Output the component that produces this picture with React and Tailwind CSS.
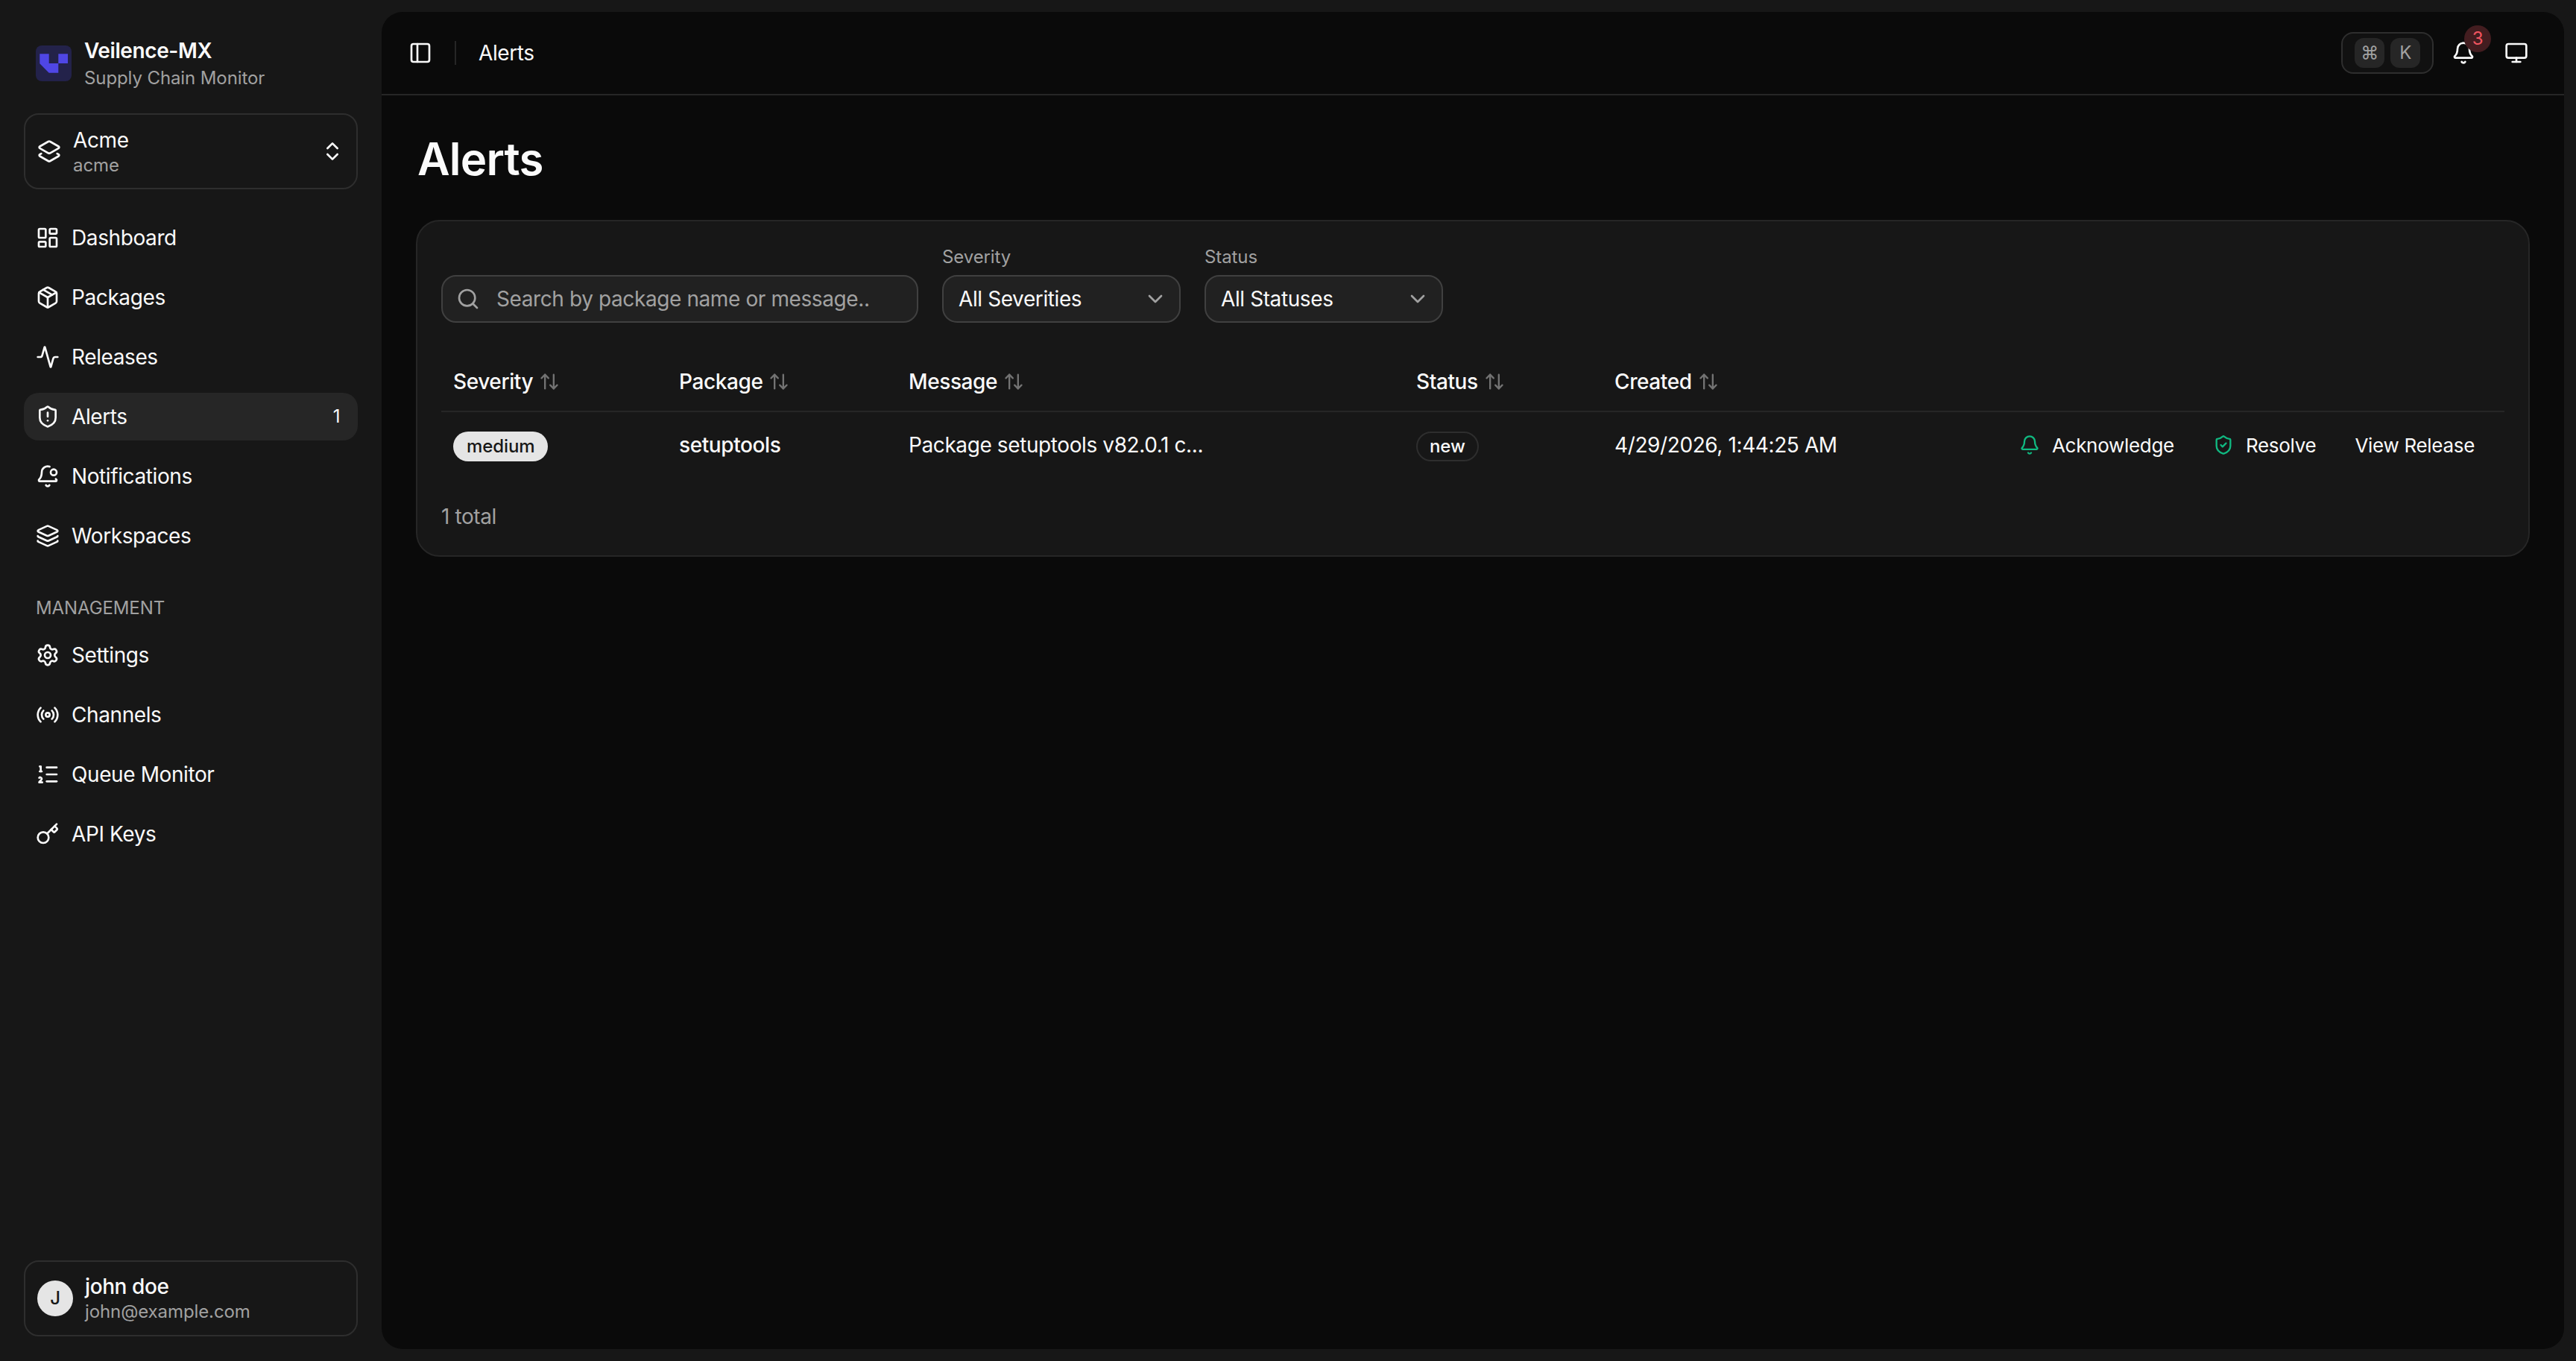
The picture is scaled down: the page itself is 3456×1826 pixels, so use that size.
import {
  Activity, ArrowUpDown, Bell, BellDot, ChevronDown, ChevronsUpDown, Key, Layers, Layers2,
  LayoutDashboard, ListOrdered, Monitor, Package, PanelLeft, Radio, Search, Settings,
  ShieldAlert, ShieldCheck,
} from 'lucide-react'

const MAIN_NAV = [
  { label: 'Dashboard', icon: LayoutDashboard },
  { label: 'Packages', icon: Package },
  { label: 'Releases', icon: Activity },
  { label: 'Alerts', icon: ShieldAlert, active: true, count: 1 },
  { label: 'Notifications', icon: BellDot },
  { label: 'Workspaces', icon: Layers },
]

const MANAGEMENT_NAV = [
  { label: 'Settings', icon: Settings },
  { label: 'Channels', icon: Radio },
  { label: 'Queue Monitor', icon: ListOrdered },
  { label: 'API Keys', icon: Key },
]

const COLUMNS = ['Severity', 'Package', 'Message', 'Status', 'Created']

const ROW_GRID = 'grid grid-cols-[303px_308px_681px_266px_420px_1fr] items-center'

function Logo() {
  return (
    <svg viewBox="0 0 48 48" className="w-12 h-12 shrink-0">
      <rect width="48" height="48" rx="8" fill="#23224a" />
      <path d="M5.3 11.3H17.7V24H30.3V36.7H17.7L5.3 24.3Z M30.3 11.3H43V24H30.3Z" fill="#4f46e5" />
    </svg>
  )
}

function NavItem({ item }) {
  const Icon = item.icon
  return (
    <a className={`flex items-center h-16 px-4 gap-4 rounded-[20px] text-[28px] text-[#fafafa] ${item.active ? 'bg-[#262626]' : ''}`}>
      <Icon size={32} className="shrink-0" />
      <span className="flex-1">{item.label}</span>
      {item.count && <span className="text-[24px] pr-2">{item.count}</span>}
    </a>
  )
}

function Sidebar() {
  return (
    <aside className="w-[512px] shrink-0 flex flex-col px-8 pt-[48px] pb-[33px]">
      <div className="flex items-center gap-[17px] px-4">
        <Logo />
        <div className="flex flex-col">
          <span className="text-[28px] leading-[40px] font-semibold text-[#fafafa]">Veilence-MX</span>
          <span className="text-[24px] leading-[33px] tracking-[-0.1px] text-[#a1a1a1]">Supply Chain Monitor</span>
        </div>
      </div>

      <button className="mt-[31px] h-[102px] flex items-center gap-4 pl-4 pr-4 border-2 border-[#2e2e2e] rounded-[20px] text-left">
        <Layers2 size={32} className="text-[#fafafa] shrink-0" />
        <div className="flex-1 flex flex-col pt-0.5">
          <span className="text-[28px] leading-[36px] text-[#fafafa]">Acme</span>
          <span className="text-[24px] leading-[32px] tracking-[-0.1px] text-[#a1a1a1]">acme</span>
        </div>
        <ChevronsUpDown size={32} className="text-[#fafafa] shrink-0" />
      </button>

      <nav className="mt-[33px] flex flex-col gap-4">
        {MAIN_NAV.map((item) => <NavItem key={item.label} item={item} />)}
      </nav>

      <p className="mt-[49px] px-4 text-[24px] leading-[32px] tracking-[-0.1px] text-[#a1a1a1]">MANAGEMENT</p>
      <nav className="mt-[15px] flex flex-col gap-4">
        {MANAGEMENT_NAV.map((item) => <NavItem key={item.label} item={item} />)}
      </nav>

      <button className="mt-auto h-[102px] flex items-center gap-4 px-4 border-2 border-[#2e2e2e] rounded-[20px] text-left">
        <span className="w-12 h-12 rounded-full bg-[#e5e5e5] text-[#171717] flex items-center justify-center text-[24px] font-medium shrink-0">J</span>
        <div className="flex flex-col">
          <span className="text-[28px] leading-[36px] font-medium text-[#fafafa]">john doe</span>
          <span className="text-[24px] leading-[32px] tracking-[-0.1px] text-[#a1a1a1]">john@example.com</span>
        </div>
      </button>
    </aside>
  )
}

function Header() {
  return (
    <header className="h-[112px] shrink-0 flex items-center justify-between pl-9 pr-[48px] border-b-2 border-[#262626]">
      <div className="flex items-center">
        <PanelLeft size={32} className="text-[#fafafa]" />
        <div className="w-0.5 h-8 bg-[#262626] mx-[30px]" />
        <span className="text-[28px] text-[#fafafa]">Alerts</span>
      </div>
      <div className="flex items-center">
        <div className="flex items-center gap-2 h-14 px-4 border-2 border-[#2e2e2e] rounded-2xl bg-[#111111]">
          <kbd className="w-10 h-10 flex items-center justify-center rounded-xl bg-[#262626] text-[24px] text-[#a1a1a1] font-[Inter]">⌘</kbd>
          <kbd className="w-10 h-10 flex items-center justify-center rounded-xl bg-[#262626] text-[24px] text-[#a1a1a1] font-[Inter]">K</kbd>
        </div>
        <div className="relative ml-[24px]">
          <Bell size={32} className="text-[#fafafa]" />
          <span className="absolute -top-[21px] left-[17px] w-9 h-9 rounded-full bg-[#431d20] text-[#f25560] text-[24px] flex items-center justify-center">3</span>
        </div>
        <Monitor size={32} className="ml-[39px] text-[#fafafa]" />
      </div>
    </header>
  )
}

function Dropdown({ label, value }) {
  return (
    <div className="flex flex-col w-80">
      <label className="text-[24px] leading-[32px] tracking-[-0.1px] text-[#a1a1a1] mb-2">{label}</label>
      <button className="h-16 flex items-center justify-between pl-5 pr-4 rounded-[20px] border-2 border-[#404040] bg-[#212121] text-[28px] text-[#fafafa]">
        {value}
        <ChevronDown size={32} className="text-[#a1a1a1]" />
      </button>
    </div>
  )
}

function AlertsCard() {
  return (
    <section className="border-2 border-[#262626] rounded-[32px] bg-[#171717] p-8">
      <div className="flex items-end gap-8">
        <div className="relative w-[640px] h-16">
          <Search size={32} className="absolute left-5 top-[16px] text-[#a1a1a1]" />
          <input
            placeholder="Search by package name or message.."
            className="w-full h-full pl-[72px] pr-4 rounded-[20px] border-2 border-[#404040] bg-[#212121] text-[28px] text-[#fafafa] placeholder:text-[#a1a1a1] outline-none"
          />
        </div>
        <Dropdown label="Severity" value="All Severities" />
        <Dropdown label="Status" value="All Statuses" />
      </div>

      <div className={`${ROW_GRID} mt-10 h-[80px] border-b-2 border-[#262626]`}>
        {COLUMNS.map((col) => (
          <div key={col} className="pl-4 flex items-center gap-2 text-[28px] font-medium text-[#fafafa]">
            {col}
            <ArrowUpDown size={28} className="text-[#737373]" />
          </div>
        ))}
      </div>

      <div className={`${ROW_GRID} h-[88px] text-[28px] text-[#fafafa]`}>
        <div className="pl-4">
          <span className="inline-flex items-center h-10 px-[18px] rounded-full bg-[#e5e5e5] text-[#171717] text-[24px] font-medium tracking-[-0.1px]">medium</span>
        </div>
        <div className="pl-4 font-medium">setuptools</div>
        <div className="pl-4">Package setuptools v82.0.1 c...</div>
        <div className="pl-4">
          <span className="inline-flex items-center h-10 px-4 rounded-full border-2 border-[#2e2e2e] text-[24px] font-medium tracking-[-0.1px]">new</span>
        </div>
        <div className="pl-4">4/29/2026, 1:44:25 AM</div>
        <div className="flex items-center justify-end gap-1 pr-4 text-[26px] tracking-[-0.3px]">
          <button className="flex items-center gap-4 px-6 h-14">
            <Bell size={28} className="text-[#10b981]" />
            Acknowledge
          </button>
          <button className="flex items-center gap-4 px-6 h-14">
            <ShieldCheck size={28} className="text-[#10b981]" />
            Resolve
          </button>
          <button className="flex items-center px-6 h-14">View Release</button>
        </div>
      </div>

      <p className="mt-[32px] text-[28px] leading-[40px] text-[#a1a1a1]">1 total</p>
    </section>
  )
}

export default function App() {
  return (
    <div className="h-screen w-full flex bg-[#171717] font-[Inter,sans-serif] tracking-[-0.4px] overflow-hidden">
      <Sidebar />
      <main className="flex-1 flex flex-col my-4 mr-4 rounded-[28px] bg-[#0a0a0a] overflow-hidden">
        <Header />
        <div className="flex-1 px-[46px]">
          <h1 className="pl-0.5 mt-[53px] mb-[50px] text-[60px] leading-[64px] font-semibold tracking-[-0.8px] text-[#fafafa]">Alerts</h1>
          <AlertsCard />
        </div>
      </main>
    </div>
  )
}
